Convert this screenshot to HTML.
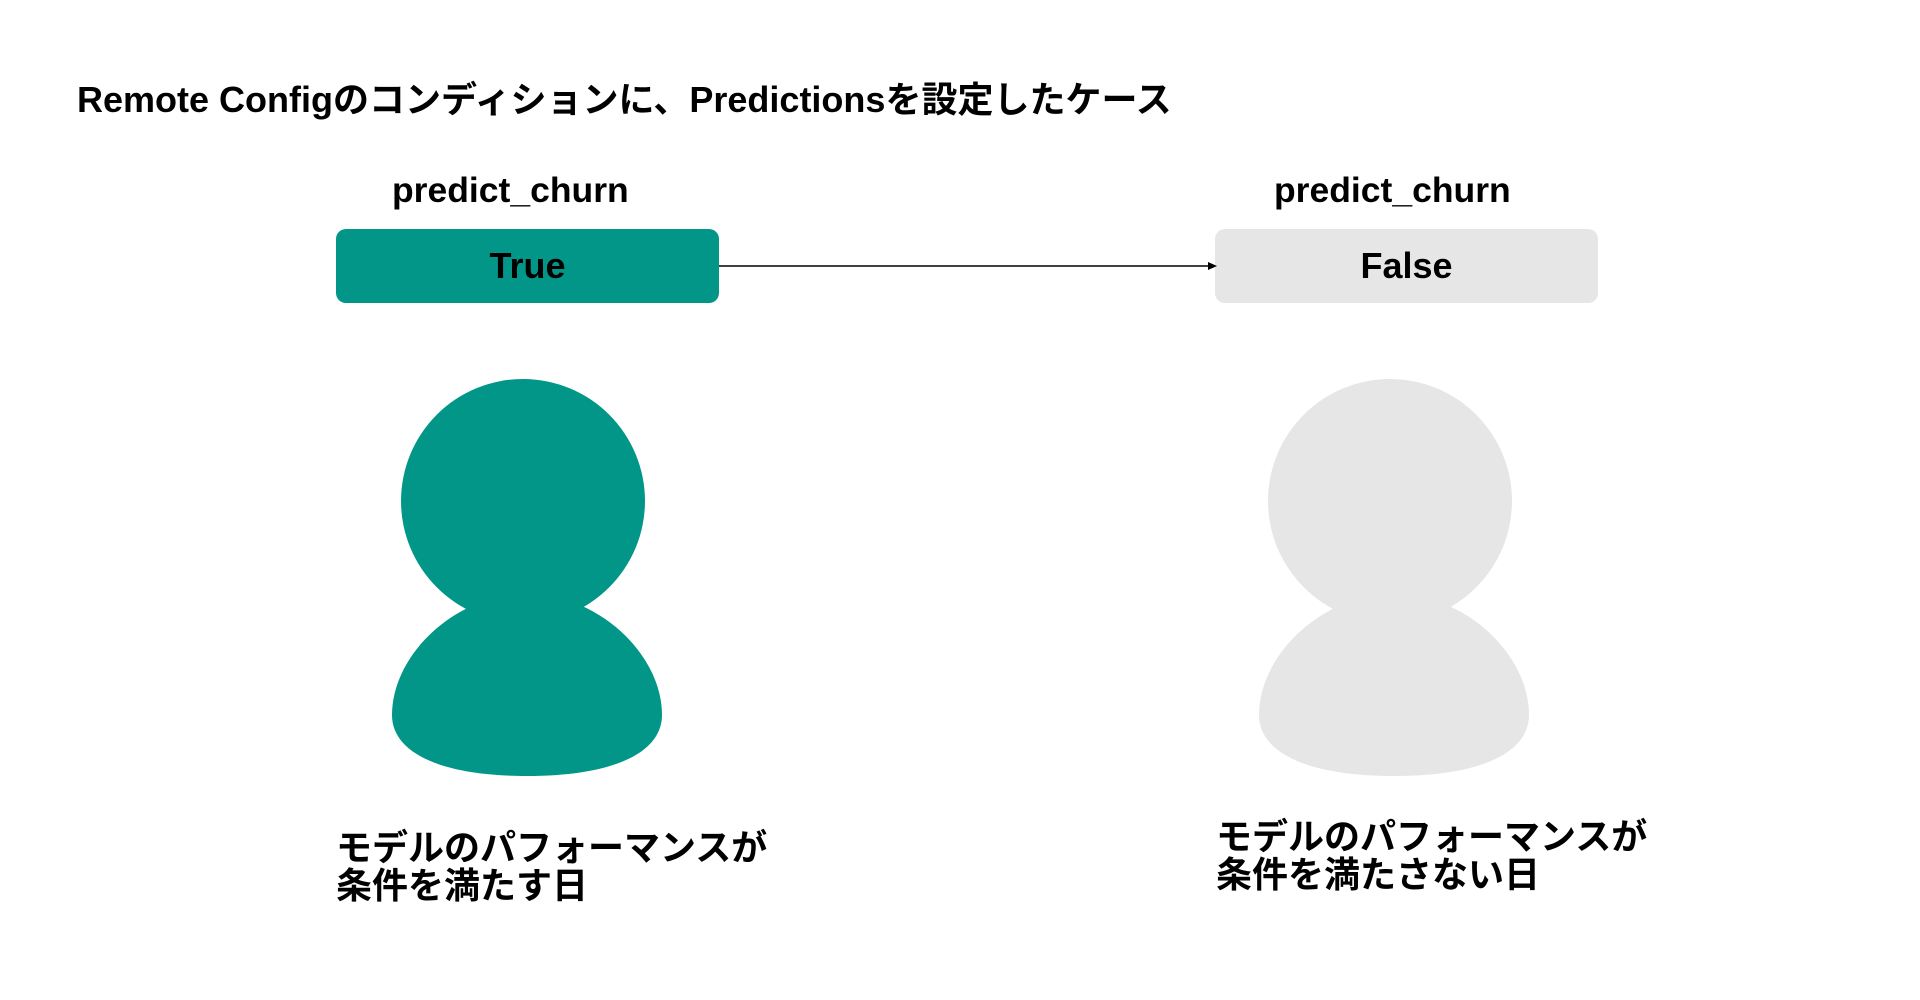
<!DOCTYPE html>
<html><head><meta charset="utf-8"><style>
body{margin:0;width:1920px;height:1000px;background:#fff;position:relative;overflow:hidden;font-family:"Liberation Sans","Noto Sans CJK JP",sans-serif;font-weight:bold;color:#000}
.a{position:absolute;white-space:nowrap}
.box{position:absolute;top:229px;width:383px;height:74px;border-radius:10px;display:flex;align-items:center;justify-content:center;font-size:36px}
</style></head><body>
<div class="a" style="left:77px;top:80px;font-size:36px;line-height:40px">Remote Configのコンディションに、Predictionsを設定したケース</div>
<div class="a" style="left:392px;top:170px;font-size:35.5px;line-height:40px">predict_churn</div>
<div class="a" style="left:1274px;top:170px;font-size:35.5px;line-height:40px">predict_churn</div>
<div class="box" style="left:336px;background:#029688">True</div>
<div class="box" style="left:1215px;background:#e6e6e6">False</div>
<svg class="a" style="left:0;top:0" width="1920" height="1000">
<line x1="719" y1="266" x2="1212" y2="266" stroke="#000" stroke-width="1.5"/>
<path d="M1217,266 L1208,262 L1208,270 Z" fill="#000"/>
<g fill="#029688">
<path d="M392,715 C392,655 455,594 527,594 C599,594 662,655 662,715 C662,752 615,776 527,776 C439,776 392,752 392,715 Z"/>
<circle cx="523" cy="501" r="122"/>
</g>
<g fill="#e6e6e6">
<path d="M1259,715 C1259,655 1322,594 1394,594 C1466,594 1529,655 1529,715 C1529,752 1482,776 1394,776 C1306,776 1259,752 1259,715 Z"/>
<circle cx="1390" cy="501" r="122"/>
</g>
</svg>
<div class="a" style="left:336px;top:829px;font-size:36px;line-height:38px">モデルのパフォーマンスが<br>条件を満たす日</div>
<div class="a" style="left:1216px;top:818px;font-size:36px;line-height:38px">モデルのパフォーマンスが<br>条件を満たさない日</div>
</body></html>
